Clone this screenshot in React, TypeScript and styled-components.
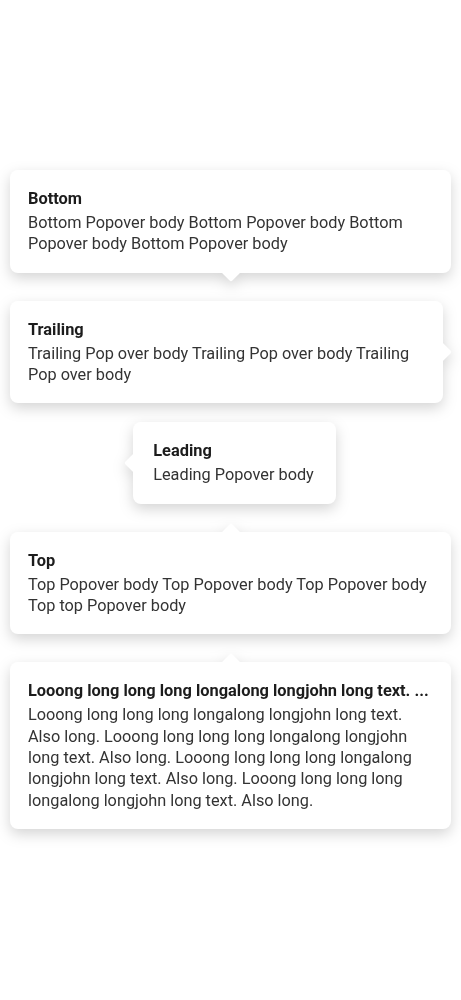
import React from "react";
import styled, { createGlobalStyle, css } from "styled-components";

const GlobalStyle = createGlobalStyle`
  html, body {
    margin: 0;
    padding: 0;
    background: #ffffff;
  }
  body {
    font-family: Roboto, "Liberation Sans", Arial, sans-serif;
    -webkit-font-smoothing: antialiased;
  }
`;

type Placement = "bottom" | "top" | "leading" | "trailing";

const Page = styled.main`
  box-sizing: border-box;
  width: 461px;
  min-height: 1000px;
  padding: 170px 10px 40px;
  display: flex;
  flex-direction: column;
  gap: 19px;
`;

const Wrapper = styled.div<{ $placement: Placement }>`
  display: flex;
  filter: drop-shadow(0 5px 7px rgba(0, 0, 0, 0.17));
  ${(p) =>
    p.$placement === "bottom" &&
    css`
      padding-bottom: 9px;
    `}
  ${(p) =>
    p.$placement === "top" &&
    css`
      padding-top: 9px;
    `}
  ${(p) =>
    p.$placement === "trailing" &&
    css`
      padding-right: 8px;
    `}
  ${(p) =>
    p.$placement === "leading" &&
    css`
      align-self: center;
      padding-left: 8px;
    `}
`;

const Card = styled.div<{ $placement: Placement }>`
  position: relative;
  box-sizing: border-box;
  flex: 1 1 auto;
  min-width: 0;
  background: #ffffff;
  border-radius: 8px;
  padding: ${(p) => (p.$placement === "leading" ? "18px 22px 18px 20px" : "18px")};

  &::after {
    content: "";
    position: absolute;
    width: 14px;
    height: 14px;
    background: #ffffff;
    border-radius: 2px;
    transform: rotate(45deg);
    ${(p) =>
      p.$placement === "bottom" &&
      css`
        left: calc(50% - 7px);
        bottom: -6px;
      `}
    ${(p) =>
      p.$placement === "top" &&
      css`
        left: calc(50% - 7px);
        top: -6px;
      `}
    ${(p) =>
      p.$placement === "trailing" &&
      css`
        top: calc(50% - 7px);
        right: -6px;
      `}
    ${(p) =>
      p.$placement === "leading" &&
      css`
        top: calc(50% - 7px);
        left: -6px;
      `}
  }
`;

const Title = styled.div`
  font-size: 16.4px;
  font-weight: 700;
  line-height: 21px;
  color: #1c1c1c;
  margin-bottom: 3px;
  white-space: nowrap;
  overflow: hidden;
  text-overflow: ellipsis;
`;

const Body = styled.div`
  font-size: 16.3px;
  font-weight: 400;
  line-height: 21.33px;
  color: #333333;
`;

type PopoverProps = {
  placement: Placement;
  title: string;
  body: string;
};

function Popover({ placement, title, body }: PopoverProps) {
  return (
    <Wrapper $placement={placement}>
      <Card $placement={placement}>
        <Title>{title}</Title>
        <Body>{body}</Body>
      </Card>
    </Wrapper>
  );
}

export default function App() {
  return (
    <>
      <GlobalStyle />
      <Page>
        <Popover
          placement="bottom"
          title="Bottom"
          body="Bottom Popover body Bottom Popover body Bottom Popover body Bottom Popover body"
        />
        <Popover
          placement="trailing"
          title="Trailing"
          body="Trailing Pop over body Trailing Pop over body Trailing Pop over body"
        />
        <Popover placement="leading" title="Leading" body="Leading Popover body" />
        <Popover
          placement="top"
          title="Top"
          body="Top Popover body Top Popover body Top Popover body Top top Popover body"
        />
        <Popover
          placement="top"
          title="Looong long long long longalong longjohn long text. ..."
          body="Looong long long long longalong longjohn long text. Also long. Looong long long long longalong longjohn long text. Also long. Looong long long long longalong longjohn long text. Also long. Looong long long long longalong longjohn long text. Also long."
        />
      </Page>
    </>
  );
}
